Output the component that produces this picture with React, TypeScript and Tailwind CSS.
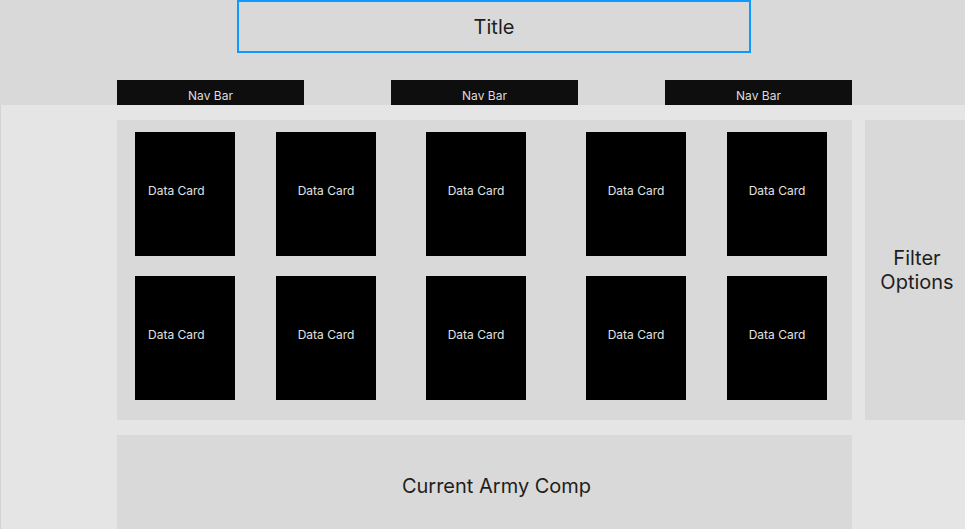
const cardCols = [
  { ml: 'ml-[18px]', first: true },
  { ml: 'ml-[41px]', first: false },
  { ml: 'ml-[50px]', first: false },
  { ml: 'ml-[60px]', first: false },
  { ml: 'ml-[41px]', first: false },
];

function DataCard({ first, ml }: { first: boolean; ml: string }) {
  return (
    <div
      className={`${ml} w-[100px] h-[124px] shrink-0 bg-black pt-[51px] text-[12px] leading-[15px] text-[#e0e0e0] ${
        first ? 'pl-[13px] text-left' : 'text-center'
      }`}
    >
      Data Card
    </div>
  );
}

function NavBar({ ml }: { ml: string }) {
  return (
    <div className={`${ml} w-[187px] h-[25px] bg-[#0e0e0e] pt-[8px] text-center text-[12px] leading-[15px] text-[#dcdcdc]`}>
      Nav Bar
    </div>
  );
}

export default function App() {
  return (
    <div className="w-[965px] h-[529px] overflow-hidden bg-[#e5e5e5] font-['Inter',sans-serif]">
      <div className="h-[105px] bg-[#d9d9d9]">
        <div className="ml-[237px] w-[514px] h-[53px] border-2 border-[#0d99ff] flex items-center justify-center text-[20px] text-[#1e1e1e]">
          Title
        </div>
        <div className="mt-[27px] flex">
          <NavBar ml="ml-[117px]" />
          <NavBar ml="ml-[87px]" />
          <NavBar ml="ml-[87px]" />
        </div>
      </div>

      <div className="h-[424px] border-l border-[#d4d4d4] pt-[15px] pl-[116px]">
        <div className="flex gap-[13px]">
          <div className="w-[735px] h-[300px] bg-[#d9d9d9] pt-[12px] flex flex-col gap-[20px]">
            {[0, 1].map((row) => (
              <div key={row} className="flex">
                {cardCols.map((c, i) => (
                  <DataCard key={i} first={c.first} ml={c.ml} />
                ))}
              </div>
            ))}
          </div>
          <div className="w-[100px] h-[300px] bg-[#d9d9d9] pl-[4px] flex items-center justify-center text-center text-[20px] leading-[24px] text-[#1e1e1e]">
            Filter
            <br />
            Options
          </div>
        </div>
        <div className="mt-[15px] w-[735px] h-[100px] bg-[#d9d9d9] pt-[39px] pl-[24px] text-center text-[20px] leading-[24px] text-[#1e1e1e]">
          Current Army Comp
        </div>
      </div>
    </div>
  );
}
